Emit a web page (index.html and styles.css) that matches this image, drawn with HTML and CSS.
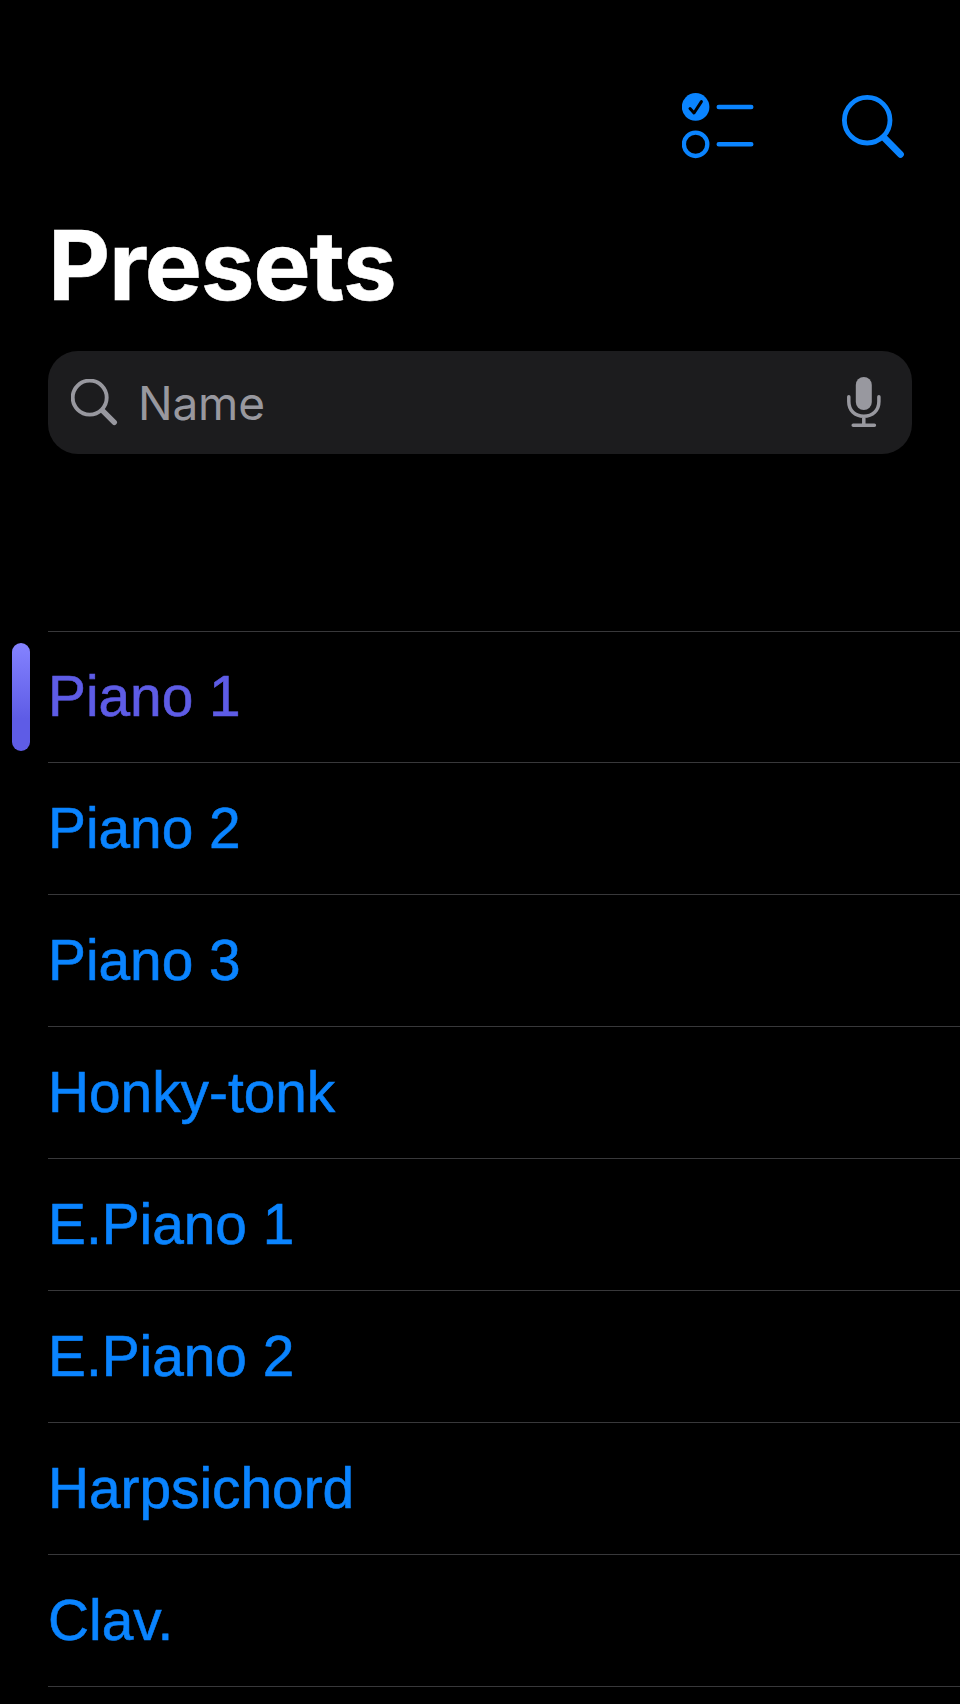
FILE: index.html
```html
<!DOCTYPE html>
<html lang="en">
<head>
<meta charset="utf-8">
<title>Presets</title>
<link rel="stylesheet" href="styles.css">
</head>
<body>
<main class="screen">
  <nav class="toolbar">
    <svg class="icon-select" width="74" height="68" viewBox="0 0 74 68" fill="none" stroke-linecap="round" stroke-linejoin="round">
      <circle cx="13.6" cy="13.9" r="13.8" fill="#0a84ff"/>
      <path d="M8 15.6 12 20 19.4 8.6" stroke="#000" stroke-width="3"/>
      <circle cx="13.6" cy="51.3" r="11.7" stroke="#0a84ff" stroke-width="4.3"/>
      <path d="M36.8 14H69.2M36.8 51.3H69.2" stroke="#0a84ff" stroke-width="4.6"/>
    </svg>
    <svg class="icon-find" width="64" height="66" viewBox="0 0 64 66" fill="none" stroke="#0a84ff" stroke-linecap="round">
      <circle cx="25.2" cy="25.2" r="22.8" stroke-width="4.8"/>
      <path d="M42.5 43.2 58.5 59.4" stroke-width="6.8"/>
    </svg>
  </nav>
  <h1 class="title">Presets</h1>
  <div class="search">
    <svg width="48" height="48" viewBox="0 0 48 48" fill="none" stroke="#98989f" stroke-linecap="round">
      <circle cx="18.7" cy="18.6" r="17" stroke-width="3.9"/>
      <path d="M31.8 31.8 43.3 43.3" stroke-width="5.4"/>
    </svg>
    <span class="placeholder">Name</span>
    <svg class="mic" width="34" height="51" viewBox="0 0 34 51" fill="none" stroke="#98989f" stroke-width="3.5" stroke-linecap="round">
      <rect x="8.8" y="0" width="16" height="33" rx="8" fill="#98989f" stroke="none"/>
      <path d="M1.8 19.7V24.5C1.8 33.6 8 39.3 16.8 39.3S31.9 33.6 31.9 24.5V19.7M16.8 39.3V48.2M6.2 48.2H27.4"/>
    </svg>
  </div>
  <ul class="presets">
    <li class="preset current">Piano 1</li>
    <li class="preset">Piano 2</li>
    <li class="preset">Piano 3</li>
    <li class="preset">Honky-tonk</li>
    <li class="preset">E.Piano 1</li>
    <li class="preset">E.Piano 2</li>
    <li class="preset">Harpsichord</li>
    <li class="preset">Clav.</li>
  </ul>
</main>
</body>
</html>
```
FILE: styles.css
```css
* { box-sizing: border-box; }
body { margin: 0; background: #000; }
.screen {
  height: 1704px;
  overflow: hidden;
  padding-left: 48px;
  background: #000;
}
.toolbar {
  display: flex;
  justify-content: flex-end;
  height: 210px;
  padding: 93px 54px 0 0;
}
.icon-select { margin-right: 86px; }
.icon-find { margin-top: 2px; }
.title {
  margin: 0;
  height: 141px;
  font: 700 96px/110px Inter, sans-serif;
  letter-spacing: -1.1px;
  color: #fff;
  -webkit-text-stroke: 0.5px #fff;
}
.search {
  display: flex;
  align-items: flex-start;
  width: 864px;
  height: 103px;
  padding: 28px 31px 0 23px;
  border-radius: 30px;
  background: #1c1c1e;
}
.placeholder {
  flex: 1;
  margin-left: 19px;
  font: 400 46px/48px Inter, sans-serif;
  letter-spacing: -0.2px;
  color: #98989f;
}
.mic { margin-top: -2px; }
.presets {
  margin: 177px 0 0;
  padding: 0;
  list-style: none;
  border-top: 1px solid #38383a;
}
.preset {
  height: 132px;
  border-bottom: 1px solid #38383a;
  font: 56.8px/131px "Liberation Sans", Arial, sans-serif;
  color: #0a84ff;
  -webkit-text-stroke: 0.6px currentColor;
}
.current {
  position: relative;
  height: 131px;
  line-height: 129px;
  color: #5e5ce6;
}
.current::before {
  content: "";
  position: absolute;
  left: -36px;
  top: 11px;
  width: 18px;
  height: 108px;
  border-radius: 9px;
  background: linear-gradient(#8583ff, #5e5ce6 70%);
}
```
